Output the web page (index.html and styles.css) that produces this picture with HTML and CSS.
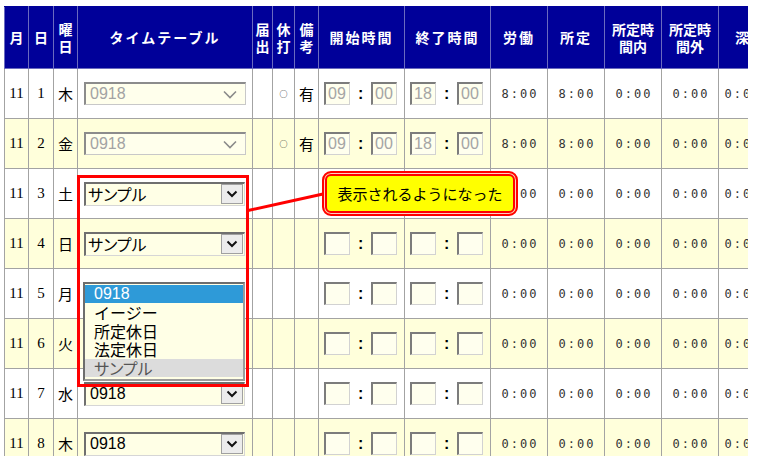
FILE: index.html
```html
<!DOCTYPE html>
<html lang="ja">
<head>
<meta charset="utf-8">
<title>タイムテーブル</title>
<link rel="stylesheet" href="styles.css">
</head>
<body>
<div class="frame">
  <table class="sheet">
    <colgroup>
      <col class="c24"><col class="c25"><col class="c24"><col class="c175"><col class="c20"><col class="c22"><col class="c24"><col class="c86"><col class="c86"><col class="c57"><col class="c57"><col class="c57"><col class="c57"><col class="c47">
    </colgroup>
    <thead>
      <tr class="head">
        <th>月</th><th>日</th><th>曜<br>日</th><th class="wide">タイムテーブル</th><th>届<br>出</th><th>休<br>打</th><th>備<br>考</th><th class="wide">開始時間</th><th class="wide">終了時間</th><th class="wide">労働</th><th class="wide">所定</th><th>所定時<br>間内</th><th>所定時<br>間外</th><th>深</th>
      </tr>
    </thead>
    <tbody>
      <tr class="white">
        <td class="num">11</td><td class="num">1</td><td class="day">木</td>
        <td><div class="sel disabled"><span class="val">0918</span><span class="chev"><svg width="14" height="9" viewBox="0 0 14 9"><path d="M1 1.5 L7 7.5 L13 1.5" fill="none" stroke="currentColor" stroke-width="1.6"/></svg></span></div></td>
        <td></td><td class="mark">○</td><td class="day">有</td>
        <td><div class="time"><span class="tb dis">09</span><span class="colon">:</span><span class="tb dis">00</span></div></td>
        <td><div class="time"><span class="tb dis">18</span><span class="colon">:</span><span class="tb dis">00</span></div></td>
        <td class="hm">8:00</td><td class="hm">8:00</td><td class="hm">0:00</td><td class="hm">0:00</td><td class="hm">0:00</td>
      </tr>
      <tr class="yellow">
        <td class="num">11</td><td class="num">2</td><td class="day">金</td>
        <td><div class="sel disabled"><span class="val">0918</span><span class="chev"><svg width="14" height="9" viewBox="0 0 14 9"><path d="M1 1.5 L7 7.5 L13 1.5" fill="none" stroke="currentColor" stroke-width="1.6"/></svg></span></div></td>
        <td></td><td class="mark">○</td><td class="day">有</td>
        <td><div class="time"><span class="tb dis">09</span><span class="colon">:</span><span class="tb dis">00</span></div></td>
        <td><div class="time"><span class="tb dis">18</span><span class="colon">:</span><span class="tb dis">00</span></div></td>
        <td class="hm">8:00</td><td class="hm">8:00</td><td class="hm">0:00</td><td class="hm">0:00</td><td class="hm">0:00</td>
      </tr>
      <tr class="white">
        <td class="num">11</td><td class="num">3</td><td class="day">土</td>
        <td><div class="sel"><span class="val jp">サンプル</span><span class="btn"><svg width="12" height="8" viewBox="0 0 12 8"><path d="M1.5 1.5 L6 6 L10.5 1.5" fill="none" stroke="currentColor" stroke-width="2"/></svg></span></div></td>
        <td></td><td></td><td></td>
        <td><div class="time"><span class="tb"></span><span class="colon">:</span><span class="tb"></span></div></td>
        <td><div class="time"><span class="tb"></span><span class="colon">:</span><span class="tb"></span></div></td>
        <td class="hm">0:00</td><td class="hm">0:00</td><td class="hm">0:00</td><td class="hm">0:00</td><td class="hm">0:00</td>
      </tr>
      <tr class="yellow">
        <td class="num">11</td><td class="num">4</td><td class="day">日</td>
        <td><div class="sel"><span class="val jp">サンプル</span><span class="btn"><svg width="12" height="8" viewBox="0 0 12 8"><path d="M1.5 1.5 L6 6 L10.5 1.5" fill="none" stroke="currentColor" stroke-width="2"/></svg></span></div></td>
        <td></td><td></td><td></td>
        <td><div class="time"><span class="tb"></span><span class="colon">:</span><span class="tb"></span></div></td>
        <td><div class="time"><span class="tb"></span><span class="colon">:</span><span class="tb"></span></div></td>
        <td class="hm">0:00</td><td class="hm">0:00</td><td class="hm">0:00</td><td class="hm">0:00</td><td class="hm">0:00</td>
      </tr>
      <tr class="white">
        <td class="num">11</td><td class="num">5</td><td class="day">月</td>
        <td></td>
        <td></td><td></td><td></td>
        <td><div class="time"><span class="tb"></span><span class="colon">:</span><span class="tb"></span></div></td>
        <td><div class="time"><span class="tb"></span><span class="colon">:</span><span class="tb"></span></div></td>
        <td class="hm">0:00</td><td class="hm">0:00</td><td class="hm">0:00</td><td class="hm">0:00</td><td class="hm">0:00</td>
      </tr>
      <tr class="yellow">
        <td class="num">11</td><td class="num">6</td><td class="day">火</td>
        <td></td>
        <td></td><td></td><td></td>
        <td><div class="time"><span class="tb"></span><span class="colon">:</span><span class="tb"></span></div></td>
        <td><div class="time"><span class="tb"></span><span class="colon">:</span><span class="tb"></span></div></td>
        <td class="hm">0:00</td><td class="hm">0:00</td><td class="hm">0:00</td><td class="hm">0:00</td><td class="hm">0:00</td>
      </tr>
      <tr class="white">
        <td class="num">11</td><td class="num">7</td><td class="day">水</td>
        <td><div class="sel"><span class="val">0918</span><span class="btn"><svg width="12" height="8" viewBox="0 0 12 8"><path d="M1.5 1.5 L6 6 L10.5 1.5" fill="none" stroke="currentColor" stroke-width="2"/></svg></span></div></td>
        <td></td><td></td><td></td>
        <td><div class="time"><span class="tb"></span><span class="colon">:</span><span class="tb"></span></div></td>
        <td><div class="time"><span class="tb"></span><span class="colon">:</span><span class="tb"></span></div></td>
        <td class="hm">0:00</td><td class="hm">0:00</td><td class="hm">0:00</td><td class="hm">0:00</td><td class="hm">0:00</td>
      </tr>
      <tr class="yellow">
        <td class="num">11</td><td class="num">8</td><td class="day">木</td>
        <td><div class="sel"><span class="val">0918</span><span class="btn"><svg width="12" height="8" viewBox="0 0 12 8"><path d="M1.5 1.5 L6 6 L10.5 1.5" fill="none" stroke="currentColor" stroke-width="2"/></svg></span></div></td>
        <td></td><td></td><td></td>
        <td><div class="time"><span class="tb"></span><span class="colon">:</span><span class="tb"></span></div></td>
        <td><div class="time"><span class="tb"></span><span class="colon">:</span><span class="tb"></span></div></td>
        <td class="hm">0:00</td><td class="hm">0:00</td><td class="hm">0:00</td><td class="hm">0:00</td><td class="hm">0:00</td>
      </tr>
    </tbody>
  </table>

  <ul class="listbox">
    <li class="picked">0918</li>
    <li>イージー</li>
    <li>所定休日</li>
    <li>法定休日</li>
    <li class="hover">サンプル</li>
  </ul>

  <div class="highlight"></div>
  <svg class="leader" width="744" height="450" viewBox="0 0 744 450"><line x1="244" y1="204.5" x2="319" y2="188" stroke="#ff0000" stroke-width="3"/></svg>
  <div class="callout">表示されるようになった</div>
</div>
</body>
</html>
```

FILE: styles.css
```css
html, body {
  margin: 0;
  padding: 0;
  background: #ffffff;
}

body {
  font-family: "Noto Sans CJK JP", "Liberation Sans", sans-serif;
  color: #000;
}

.frame {
  position: relative;
  margin: 6px 0 0 4px;
  width: 744px;
  height: 450px;
  overflow: hidden;
}

.sheet {
  border-collapse: collapse;
  table-layout: fixed;
  width: 761px;
}

.c24 { width: 24px; }
.c25 { width: 25px; }
.c175 { width: 175px; }
.c20 { width: 20px; }
.c22 { width: 22px; }
.c86 { width: 86px; }
.c57 { width: 57px; }
.c47 { width: 47px; }

.head {
  height: 62px;
}

.head th {
  background: #000099;
  color: #ffffff;
  font-weight: bold;
  font-size: 14px;
  line-height: 17px;
  border: 1px solid #6a6abf;
  border-top-color: #000099;
  padding: 0;
  text-align: center;
  vertical-align: middle;
  white-space: nowrap;
  overflow: hidden;
}

.head th.wide {
  letter-spacing: 2px;
}

tbody tr {
  height: 50px;
}

tbody td {
  border: 1px solid #a3a3a3;
  padding: 0;
  text-align: center;
  vertical-align: middle;
  font-size: 15px;
  white-space: nowrap;
  overflow: hidden;
}

.white td { background: #ffffff; }
.yellow td { background: #ffffdb; }

td.num {
  font-family: "Liberation Serif", serif;
  font-size: 15px;
}

td.day {
  font-family: "Noto Sans CJK JP", sans-serif;
  font-size: 15px;
}

td.mark {
  font-size: 8px;
}

td.hm {
  font-family: "DejaVu Sans Mono", monospace;
  font-size: 12px;
  letter-spacing: 2px;
  color: #333;
  padding-left: 2px;
}

/* select boxes */
.sel {
  box-sizing: border-box;
  display: flex;
  align-items: center;
  width: 161px;
  height: 24px;
  margin-left: 6px;
  background: #ffffe6;
  border-style: solid;
  border-width: 2px 1px 1px 2px;
  border-color: #6f6f6f #d6d6d6 #d6d6d6 #6f6f6f;
  text-align: left;
}

.sel .val {
  flex: 1;
  padding-left: 4px;
  font-family: "Liberation Sans", sans-serif;
  font-size: 16px;
  line-height: 20px;
  color: #000;
}

.sel .val.jp {
  font-family: "Noto Sans CJK JP", sans-serif;
  font-feature-settings: "palt";
  padding-left: 2px;
}

.sel .btn {
  display: flex;
  align-items: center;
  justify-content: center;
  box-sizing: border-box;
  width: 22px;
  height: 20px;
  margin-right: 1px;
  background: #ececec;
  border: 1px solid #a0a0a0;
  color: #111;
}

.sel.disabled {
  width: 162px;
  height: 23px;
  background: #ffffec;
  border-color: #8c8c8c #c8c8c8 #c8c8c8 #8c8c8c;
}

.sel.disabled .val {
  color: #a3a3a3;
}

.sel.disabled .chev {
  display: flex;
  align-items: center;
  width: 22px;
  color: #8a8a8a;
}

/* time inputs */
.time {
  display: flex;
  align-items: center;
  justify-content: center;
  gap: 8px;
  padding-right: 2px;
}

.tb {
  box-sizing: border-box;
  width: 26px;
  height: 23px;
  background: #ffffee;
  border-style: solid;
  border-width: 2px 1px 1px 2px;
  border-color: #7c7c7c #d2d2d2 #d2d2d2 #7c7c7c;
  font-family: "Liberation Sans", sans-serif;
  font-size: 16px;
  line-height: 20px;
  text-align: left;
  padding-left: 2px;
}

.tb.dis {
  color: #a5a5a5;
}

.colon {
  font-family: "Liberation Sans", sans-serif;
  font-weight: bold;
  font-size: 16px;
  width: 5px;
  line-height: 20px;
}

/* opened dropdown list */
.listbox {
  position: absolute;
  left: 79px;
  top: 276px;
  box-sizing: border-box;
  width: 162px;
  height: 99px;
  margin: 0;
  padding: 1px 0 0 0;
  list-style: none;
  background: #ffffe6;
  border-style: solid;
  border-width: 2px 2px 2px 2px;
  border-color: #6d6d6d #9c9c9c #9c9c9c #6d6d6d;
  font-family: "Noto Sans CJK JP", sans-serif;
  font-size: 16px;
  z-index: 2;
}

.listbox li {
  height: 18.4px;
  line-height: 18px;
  padding-left: 9px;
  white-space: nowrap;
}

.listbox li.picked {
  background: #2e9ad8;
  color: #ffffff;
  font-family: "Liberation Sans", sans-serif;
}

.listbox li.hover {
  background: #dcdcdc;
  color: #555;
  font-feature-settings: "palt";
}

/* annotation overlay */
.highlight {
  position: absolute;
  left: 73px;
  top: 169px;
  width: 172px;
  height: 212px;
  box-sizing: border-box;
  border: 3px solid #ff0000;
  z-index: 3;
}

.leader {
  position: absolute;
  left: 0;
  top: 0;
  z-index: 3;
}

.callout {
  position: absolute;
  left: 318px;
  top: 165px;
  width: 196px;
  height: 45px;
  box-sizing: border-box;
  background: #ffff00;
  border: 2px solid #ff0000;
  border-radius: 9px;
  box-shadow: inset 0 0 0 1px #ffd0c0, inset 0 0 0 3px #ff0000;
  display: flex;
  align-items: center;
  justify-content: center;
  font-family: "Noto Sans CJK JP", sans-serif;
  font-size: 15px;
  color: #000;
  z-index: 4;
}
```
